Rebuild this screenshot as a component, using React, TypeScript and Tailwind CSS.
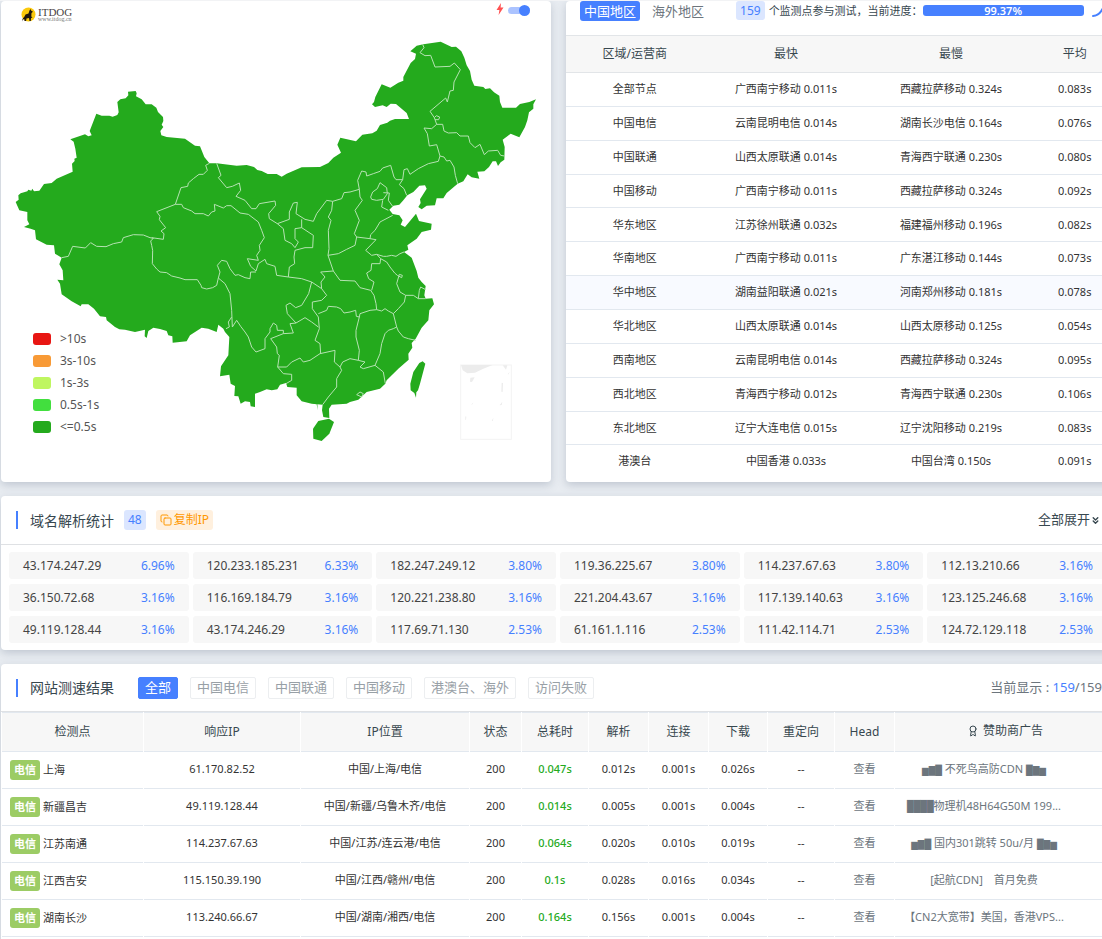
import { useState } from 'react';
import { Award, ChevronsDown, Copy } from 'lucide-react';

interface RegionRow {
  name: string;
  fast: string;
  slow: string;
  avg: string;
}

interface ResultRow {
  node: string;
  ip: string;
  place: string;
  total: string;
  dns: string;
  connect: string;
  download: string;
  ad: string;
}

const regions: RegionRow[] = [
  { name: '全部节点', fast: '广西南宁移动 0.011s', slow: '西藏拉萨移动 0.324s', avg: '0.083s' },
  { name: '中国电信', fast: '云南昆明电信 0.014s', slow: '湖南长沙电信 0.164s', avg: '0.076s' },
  { name: '中国联通', fast: '山西太原联通 0.014s', slow: '青海西宁联通 0.230s', avg: '0.080s' },
  { name: '中国移动', fast: '广西南宁移动 0.011s', slow: '西藏拉萨移动 0.324s', avg: '0.092s' },
  { name: '华东地区', fast: '江苏徐州联通 0.032s', slow: '福建福州移动 0.196s', avg: '0.082s' },
  { name: '华南地区', fast: '广西南宁移动 0.011s', slow: '广东湛江移动 0.144s', avg: '0.073s' },
  { name: '华中地区', fast: '湖南益阳联通 0.021s', slow: '河南郑州移动 0.181s', avg: '0.078s' },
  { name: '华北地区', fast: '山西太原联通 0.014s', slow: '山西太原移动 0.125s', avg: '0.054s' },
  { name: '西南地区', fast: '云南昆明电信 0.014s', slow: '西藏拉萨移动 0.324s', avg: '0.095s' },
  { name: '西北地区', fast: '青海西宁移动 0.012s', slow: '青海西宁联通 0.230s', avg: '0.106s' },
  { name: '东北地区', fast: '辽宁大连电信 0.015s', slow: '辽宁沈阳移动 0.219s', avg: '0.083s' },
  { name: '港澳台', fast: '中国香港 0.033s', slow: '中国台湾 0.150s', avg: '0.091s' },
];

const ips: [string, string][] = [
  ['43.174.247.29', '6.96%'],
  ['120.233.185.231', '6.33%'],
  ['182.247.249.12', '3.80%'],
  ['119.36.225.67', '3.80%'],
  ['114.237.67.63', '3.80%'],
  ['112.13.210.66', '3.16%'],
  ['36.150.72.68', '3.16%'],
  ['116.169.184.79', '3.16%'],
  ['120.221.238.80', '3.16%'],
  ['221.204.43.67', '3.16%'],
  ['117.139.140.63', '3.16%'],
  ['123.125.246.68', '3.16%'],
  ['49.119.128.44', '3.16%'],
  ['43.174.246.29', '3.16%'],
  ['117.69.71.130', '2.53%'],
  ['61.161.1.116', '2.53%'],
  ['111.42.114.71', '2.53%'],
  ['124.72.129.118', '2.53%'],
];

const results: ResultRow[] = [
  { node: '上海', ip: '61.170.82.52', place: '中国/上海/电信', total: '0.047s', dns: '0.012s', connect: '0.001s', download: '0.026s', ad: '▅▆▇ 不死鸟高防CDN ▇▆▅' },
  { node: '新疆昌吉', ip: '49.119.128.44', place: '中国/新疆/乌鲁木齐/电信', total: '0.014s', dns: '0.005s', connect: '0.001s', download: '0.004s', ad: '████物理机48H64G50M 199...' },
  { node: '江苏南通', ip: '114.237.67.63', place: '中国/江苏/连云港/电信', total: '0.064s', dns: '0.020s', connect: '0.010s', download: '0.019s', ad: '▅▆▇ 国内301跳转 50u/月 ▇▆▅' },
  { node: '江西吉安', ip: '115.150.39.190', place: '中国/江西/赣州/电信', total: '0.1s', dns: '0.028s', connect: '0.016s', download: '0.034s', ad: '[起航CDN]　首月免费' },
  { node: '湖南长沙', ip: '113.240.66.67', place: '中国/湖南/湘西/电信', total: '0.164s', dns: '0.156s', connect: '0.001s', download: '0.004s', ad: '【CN2大宽带】美国，香港VPS...' },
];

const filters = ['全部', '中国电信', '中国联通', '中国移动', '港澳台、海外', '访问失败'];

const legend = [
  { label: '>10s', color: 'bg-[#e81613]' },
  { label: '3s-10s', color: 'bg-[#f89a36]' },
  { label: '1s-3s', color: 'bg-[#bff660]' },
  { label: '0.5s-1s', color: 'bg-[#42df3e]' },
  { label: '<=0.5s', color: 'bg-[#24aa1d]' },
];

const mainland =
  'M47 605L56 598 55 585 62 579 82 573 85 568 94 571 97 565 102 573 118 571 132 551 155 548 170 535 218 514 216 490 224 482 223 475 230 472 226 445 221 424 211 417 255 402 265 408 275 405 269 392 289 340 305 346 328 346 338 349 352 344 356 336 352 305 361 297 377 294 385 285 384 274 407 272 410 279 408 288 425 297 437 312 455 312 469 322 474 335 489 350 490 362 485 373 490 380 481 392 484 405 500 410 555 415 585 436 600 438 613 470 628 489 650 489 710 496 740 494 762 500 772 509 785 512 803 521 830 521 845 529 860 520 905 501 960 500 985 488 1000 472 1023 457 1012 433 1021 412 1068 423 1087 403 1117 399 1130 391 1140 374 1162 367 1170 361 1185 356 1227 356 1220 338 1188 311 1172 310 1160 320 1148 315 1125 320 1116 312 1122 305 1126 290 1145 252 1171 262 1195 247 1210 241 1210 230 1232 188 1245 176 1248 160 1231 153 1250 136 1270 132 1322 124 1355 140 1368 139 1384 153 1393 172 1400 195 1410 212 1415 238 1423 256 1450 260 1456 266 1470 264 1482 276 1498 286 1500 305 1507 322 1548 322 1560 311 1588 305 1608 297 1600 312 1600 325 1587 336 1582 360 1575 380 1558 411 1532 400 1508 418 1514 440 1513 478 1502 486 1494 497 1488 483 1478 483 1467 500 1453 513 1432 514 1438 535 1415 531 1403 522 1390 543 1373 550 1340 578 1330 594 1310 594 1305 615 1280 616 1265 627 1255 620 1262 608 1260 597 1280 565 1275 555 1258 556 1240 575 1222 585 1210 600 1198 613 1180 616 1168 628 1178 641 1198 645 1208 660 1202 673 1215 680 1230 662 1248 640 1257 662 1295 670 1293 688 1265 695 1250 715 1222 735 1225 748 1212 755 1235 772 1250 812 1255 832 1265 845 1277 857 1273 885 1277 895 1297 894 1302 912 1288 930 1285 960 1265 982 1247 1015 1235 1028 1237 1042 1225 1060 1226 1078 1195 1105 1160 1140 1156 1150 1140 1165 1100 1175 1075 1198 1050 1205 1040 1210 995 1213 987 1225 988 1253 970 1250 966 1230 968 1213 952 1212 953 1230 950 1212 935 1210 905 1203 890 1185 890 1162 862 1160 858 1148 840 1153 832 1167 815 1170 800 1167 780 1175 765 1180 765 1220 752 1218 750 1205 735 1203 722 1210 715 1188 703 1187 705 1157 692 1150 688 1123 660 1128 663 1098 685 1065 688 1010 675 995 670 985 655 973 650 995 625 985 605 982 570 1005 560 1023 518 1027 517 1008 505 1005 500 992 480 986 460 982 445 992 440 1013 434 1008 435 988 405 995 375 988 358 987 345 980 320 960 318 950 300 948 282 925 265 912 245 912 242 918 215 903 185 882 180 850 172 838 190 840 188 810 178 792 185 772 165 760 162 735 140 733 108 717 105 690 92 685 72 680 88 672 82 660 82 635 58 630z';

const islands = [
  'M955 1262L987 1255 1002 1265 988 1300 965 1322 940 1315 939 1285z',
  'M1231 1150L1240 1115 1258 1088 1268 1083 1276 1090 1260 1150 1254 1170 1249 1176 1248 1192 1243 1178 1232 1170z',
];

const borders = [
  // northwest
  'M628 489L617 495 622 510 610 522 597 522 580 535 565 548 563 558 543 562 526 612 470 634 480 648 478 658 497 682 483 692 492 700 490 717 455 712',
  'M185 772L205 768 218 738 256 743 272 727 290 738 318 739 340 730 365 725 370 712 400 703 430 704 450 712 460 714 452 722 455 735 458 750 457 790 470 806 480 815 500 817 515 827 540 833 555 838 592 838 603 855 605 862 620 866 638 862 650 855 655 833',
  'M526 612L545 612 550 622 575 632 585 640 610 640 625 647 635 635 645 632 643 612 670 623 680 616 693 616 720 638 745 642 775 665 785 690 793 712 778 735 780 750 770 765 775 780 742 775 752 798 768 812 775 790 795 777 800 790 825 798 830 825 865 830',
  'M655 833L660 815 652 795 665 780 680 783 690 805 705 825 715 823 735 832 750 835 752 815 768 815',
  'M655 833L675 850 690 880 695 930 697 980M695 950L685 965 688 980 678 985',
  'M650 489L663 525 655 532 680 562 697 558 718 548 722 570 708 588 735 600 755 625 768 625 778 610 825 602 827 615 806 640 808 655 832 670 868 657 868 635 880 608 892 606 888 640 915 657 940 663 950 640 965 620 980 600 998 603 1025 595 1032 577 1050 575 1078 567',
  'M832 670L850 685 855 720 875 730 885 742 895 725 885 715 885 685 905 682 905 657M905 682L940 705 938 742 915 742 885 750 882 770 884 790 868 800 865 830',
  // north and northeast
  'M1078 567L1073 540 1085 512 1098 515 1100 527 1120 520 1140 513 1148 503 1172 495 1182 530 1188 538 1208 538 1212 508 1222 505 1230 522 1255 505 1285 490 1315 483 1320 467 1310 433 1288 437 1282 400 1272 383 1295 385 1310 372 1303 352 1290 333 1337 293 1342 305 1350 272 1360 270 1362 245 1381 208 1363 188 1350 198 1305 200 1292 165 1275 166 1260 157 1272 142 1268 132',
  'M1303 352L1309 346 1319 350 1316 358 1305 358',
  'M1310 372L1328 372 1332 392 1345 398 1370 397 1380 407 1405 407 1410 427 1425 442 1440 432 1453 463 1465 452 1493 450 1502 465 1513 467',
  'M1320 467L1332 470 1340 482 1350 480 1362 500 1366 525 1373 550',
  'M1208 538L1198 553 1212 565 1220 585',
  'M1112 590L1118 575 1132 565 1140 547 1160 562 1162 580 1150 597 1130 600 1115 597zM1150 577L1168 578 1165 600 1178 618M1148 600L1145 620 1165 630',
  'M1078 567L1080 590 1087 600 1065 630 1078 660 1063 700 1070 710 1110 715 1112 703 1125 690 1140 665 1178 645M1110 715L1128 718 1097 750',
  'M998 603L995 630 985 650 993 660 985 690 987 745 984 765M1070 710L1065 735 1040 747 1015 760 984 765',
  // central and east
  'M1097 750L1115 765 1130 762 1150 768 1160 768 1175 765 1188 768 1200 760 1212 755M1130 762L1142 775 1140 790 1115 790 1113 810 1100 818 1106 835 1122 845 1115 870',
  'M984 765L1000 812 1020 840 1065 842 1080 862 1112 870 1122 885 1128 910 1130 928',
  'M1142 775L1160 785 1170 800 1184 818 1192 825 1205 832 1207 825 1198 822 1190 850 1200 875 1217 885 1213 905 1195 925 1180 940M1217 885L1240 885 1255 895 1277 895M1255 895L1258 870 1262 860 1277 868',
  'M1000 812L962 815 975 830 963 845 965 865 935 845 905 835 865 830M935 845L926 880 920 890 905 915 887 922 870 908 858 915 862 940 888 968M965 865L980 885 965 900 937 905 937 925 955 950',
  'M955 950L958 985 945 1020 960 1030 962 1060M955 940L980 930 985 918 1010 920 1022 925 1032 938 1050 935 1067 930 1069 948 1078 950 1068 990 1068 1010 1078 1050 1075 1080',
  'M1078 950L1080 940 1110 930 1130 928 1145 932 1155 925 1165 932 1180 940 1190 980M1190 980L1180 985 1165 990 1155 1000 1145 1030 1140 1060 1125 1095M1190 980L1195 992 1210 1010 1225 1015 1247 1020',
  // south and southwest
  'M697 980L710 960 722 978 735 995 745 1010 755 1040 768 1055 795 1045 795 1015 810 995 810 985 820 968 830 975 832 990 850 990 850 1000 812 1015 830 1040 832 1060 838 1065 833 1100M850 1000L880 998 870 970 888 968 915 952 935 965 955 980',
  'M833 1100L860 1100 875 1085 900 1073 910 1085 930 1080 960 1060 1005 1050 1003 1085 1020 1100 1028 1085 1050 1075 1075 1080 1095 1085 1080 1100 1090 1105 1125 1095 1150 1115 1156 1150',
  'M1020 1100L1025 1110 1010 1135 1010 1160 985 1190 968 1213M833 1100L850 1120 875 1122 875 1140 858 1150M1070 1183L1080 1175 1090 1180 1085 1190z',
];

const cardClass = 'bg-white rounded shadow-[0_3px_8px_rgba(90,105,130,0.28)]';

const ChinaMap = () => (
  <svg viewBox="3 2 1650 1443" className="block w-full" role="img">
    <path d={mainland} fill="#24aa1d" />
    {islands.map((d) => (
      <path key={d} d={d} fill="#24aa1d" />
    ))}
    {borders.map((d) => (
      <path key={d} d={d} fill="none" stroke="#b5e3b2" strokeWidth="3" strokeLinejoin="round" />
    ))}
    <g fill="none" stroke="#f4f4f4" strokeWidth="3">
      <rect x="1382" y="1094" width="152" height="223" />
    </g>
    <g fill="#ececec">
      <path d="M1383 1094H1478L1450 1105 1425 1117 1402 1119 1388 1110z" />
      <path d="M1508 1095h14l-4 13zM1411 1132l13-1-8 14-6-1zM1505 1147l4 1-1 27-4-1zM1523 1122l6-8-3 8zM1499 1215l8-11-2 10zM1475 1262l5-10-1 9zM1396 1248l3 1-1 10-2-1zM1413 1215l7-9-2 5z" />
    </g>
  </svg>
);

const Logo = () => (
  <div className="absolute top-1.5 left-5 flex items-center gap-0.5 text-[#4a4444]">
    <svg viewBox="0 0 15 15" className="size-[15px]">
      <circle cx="7.5" cy="7.5" r="7" fill="#fbc90b" />
      <path
        d="M1 14.5L1.5 12 3.5 9.5 4.5 7.5 7.5 6.5 8.5 3.5 9.5 2 10.1 3.5 12 4.7 10.5 6 10.3 9.5 11.5 10.5 10 11 9.8 14 8.5 14 8 11 5.5 11.5 5.1 14 3.5 14 3.3 12 2 12.5z"
        fill="#20170c"
      />
    </svg>
    <div className="flex flex-col font-['Liberation_Serif',serif]">
      <span className="text-[11px] leading-[10px]">ITDOG</span>
      <span className="text-[6px] leading-[5px] text-[#777]">www.itdog.cn</span>
    </div>
  </div>
);

const MapCard = () => {
  const [fast, setFast] = useState<boolean>(true);

  return (
    <section className={`relative ${cardClass}`}>
      <ChinaMap />
      <Logo />
      <label className="absolute right-[21px] top-0 flex h-[19px] items-center gap-1">
        <svg viewBox="0 0 8 12" className="mb-1 h-3 w-2">
          <path d="M5 0L0.5 7H3.4L2.6 12 7.5 4.6H4.6z" fill="#ff5252" />
        </svg>
        <input
          type="checkbox"
          aria-label="快速"
          checked={fast}
          onChange={() => setFast(!fast)}
          className="relative h-[7px] w-[22px] appearance-none rounded-full bg-[#abc3ff] before:absolute before:-top-0.5 before:left-0 before:size-[11px] before:rounded-full before:bg-[#4680ff] checked:before:left-[11px]"
        />
      </label>
      <ul className="absolute left-8 top-[327px] text-[12px] text-[#555]">
        {legend.map((item) => (
          <li key={item.label} className="flex h-[22px] items-center gap-[9px]">
            <span className={`h-3 w-[18px] rounded-[3px] ${item.color}`} />
            <span>{item.label}</span>
          </li>
        ))}
      </ul>
    </section>
  );
};

const RegionCard = () => (
  <section className={cardClass}>
    <div className="flex h-[34px] items-start text-[12px] whitespace-nowrap text-[#37474f] *:shrink-0">
      <button className="ml-3.5 h-5 rounded-[3px] bg-[#4680ff] px-1 text-[13px] leading-[18px] text-white">中国地区</button>
      <button className="ml-2 h-5 px-1 text-[13px] leading-[18px] text-[#6c757d]">海外地区</button>
      <span className="ml-7 h-[19px] rounded-[3px] bg-[#dbe6ff] px-1 text-[12px] leading-5 text-[#4680ff]">159</span>
      <span className="ml-1 text-[11px] leading-[19px]">个监测点参与测试，当前进度：</span>
      <div className="ml-auto mt-1 h-[11px] w-[161px] rounded-[3px] bg-[#4680ff] text-center text-[11px] leading-[11px] font-semibold text-white">
        99.37%
      </div>
      <svg viewBox="0 0 16 16" className="mr-2.5 ml-2 h-4 w-4">
        <path d="M1 15Q7 15 10.5 8" fill="none" stroke="#4680ff" strokeWidth="2" strokeLinecap="round" />
      </svg>
    </div>
    <table className="h-[443px] w-full table-fixed border-collapse text-center text-[11px] text-[#333]">
      <thead>
        <tr className="h-[37px] border-y border-[#e2e5e8] bg-[#f7f7f7] text-[12px] text-[#37474f]">
          <th className="w-[25%] font-normal">区域/运营商</th>
          <th className="w-[30%] font-normal">最快</th>
          <th className="w-[30%] font-normal">最慢</th>
          <th className="w-[15%] font-normal">平均</th>
        </tr>
      </thead>
      <tbody>
        {regions.map((row, i) => (
          <tr key={row.name} className={`border-b border-[#e2e8ef] last:border-0 ${i === 6 ? 'bg-[#f8faff]' : ''}`}>
            <td>{row.name}</td>
            <td>{row.fast}</td>
            <td>{row.slow}</td>
            <td>{row.avg}</td>
          </tr>
        ))}
      </tbody>
    </table>
  </section>
);

const IpCard = () => (
  <section className={`pb-[7px] ${cardClass}`}>
    <div className="flex h-[49px] items-center border-b border-[#dfe1e4] px-[15px]">
      <span className="h-[18px] w-0.5 bg-[#4680ff]" />
      <h2 className="ml-3 text-[14px] text-[#37474f]">域名解析统计</h2>
      <span className="ml-2.5 h-5 rounded-[3px] bg-[#dbe6ff] px-1 text-[12px] leading-5 text-[#4680ff]">48</span>
      <button className="ml-2.5 flex h-5 items-center gap-0.5 rounded-[3px] bg-[#fff0de] px-1 text-[12px] text-[#ff9800]">
        <Copy size={12} />
        复制IP
      </button>
      <button className="ml-auto flex items-center text-[13px] text-[#37474f]">
        全部展开
        <ChevronsDown size={11} strokeWidth={3} />
      </button>
    </div>
    <div className="mt-[7px] grid grid-cols-6 gap-x-1 gap-y-[5px] pr-[9px] pl-2 text-[12px]">
      {ips.map(([ip, share]) => (
        <div key={ip} className="flex h-[27px] items-center justify-between rounded-[3px] bg-[#f7f7f7] px-3.5 text-[#444]">
          <span>{ip}</span>
          <span className="text-[#4680ff]">{share}</span>
        </div>
      ))}
    </div>
  </section>
);

const ResultCard = () => {
  const [active, setActive] = useState<string>('全部');

  return (
    <section className={`pb-4 ${cardClass}`}>
      <div className="flex h-12 items-center border-b border-[#dfe1e4] pl-[15px] pr-3.5">
        <span className="h-[18px] w-0.5 bg-[#4680ff]" />
        <h2 className="ml-3 text-[14px] text-[#37474f]">网站测速结果</h2>
        <div className="ml-6 flex gap-3">
          {filters.map((name) => (
            <button
              key={name}
              onClick={() => setActive(name)}
              className={`h-[22px] rounded-[2px] border px-1.5 text-[13px] leading-[19px] ${
                active === name ? 'border-[#4680ff] bg-[#4680ff] text-white' : 'border-[#eceef0] text-[#98a0a6]'
              }`}
            >
              {name}
            </button>
          ))}
        </div>
        <p className="ml-auto text-[13px] text-[#6c757d]">
          当前显示 : <span className="text-[#4680ff]">159</span>/159
        </p>
      </div>
      <table className="w-full table-fixed border-separate border-spacing-x-px border-spacing-y-0 text-center text-[11px] text-[#333]">
        <colgroup>
          <col className="w-[141px]" />
          <col className="w-[156px]" />
          <col className="w-[168px]" />
          <col className="w-[51px]" />
          <col className="w-[66px]" />
          <col className="w-[59px]" />
          <col className="w-[59px]" />
          <col className="w-[58px]" />
          <col className="w-[66px]" />
          <col className="w-[59px]" />
          <col />
        </colgroup>
        <thead>
          <tr className="text-[12px] text-[#37474f] *:h-10 *:border-y *:border-[#e2e8ef] *:bg-[#f7f7f7] *:font-normal">
            <th>检测点</th>
            <th>响应IP</th>
            <th>IP位置</th>
            <th>状态</th>
            <th>总耗时</th>
            <th>解析</th>
            <th>连接</th>
            <th>下载</th>
            <th>重定向</th>
            <th>Head</th>
            <th>
              <span className="inline-flex items-center gap-1">
                <Award size={12} />
                赞助商广告
              </span>
            </th>
          </tr>
        </thead>
        <tbody>
          {results.map((row) => (
            <tr key={row.ip} className="*:h-[37px] *:border-b *:border-[#e2e8ef] *:not-first:pb-0.5">
              <td className="pl-2 text-left">
                <span className="inline-block h-5 rounded-[3px] bg-[#9ccc65] px-1 align-middle leading-5 font-semibold text-white">电信</span>
                <span className="ml-[3px] align-middle">{row.node}</span>
              </td>
              <td>{row.ip}</td>
              <td>{row.place}</td>
              <td>200</td>
              <td className="font-medium text-[#24aa1d]">{row.total}</td>
              <td>{row.dns}</td>
              <td>{row.connect}</td>
              <td>{row.download}</td>
              <td>--</td>
              <td>
                <a href="#" className="text-[#6c757d]">查看</a>
              </td>
              <td className="pl-2">
                <a href="#" className="block w-[162px] font-['Noto_Sans','DejaVu_Sans_Mono','Noto_Sans_CJK_SC',sans-serif] whitespace-nowrap text-[#6c757d]">
                  {row.ad}
                </a>
              </td>
            </tr>
          ))}
        </tbody>
      </table>
    </section>
  );
};

export default function App() {
  return (
    <div className="h-screen overflow-hidden border-t border-[#f2f3f5] bg-[#e8ecf1] font-['Noto_Sans','Noto_Sans_CJK_SC',sans-serif]">
      <div className="flex w-[calc(100%+14px)] flex-col gap-3.5 pl-px">
        <div className="grid grid-cols-2 gap-[15px]">
          <MapCard />
          <RegionCard />
        </div>
        <IpCard />
        <ResultCard />
      </div>
    </div>
  );
}
